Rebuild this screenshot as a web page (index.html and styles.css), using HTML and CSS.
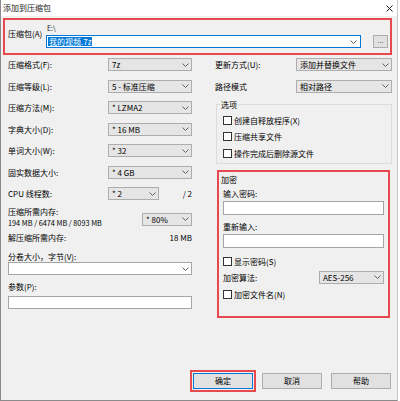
FILE: index.html
```html
<!DOCTYPE html>
<html lang="zh-CN">
<head>
<meta charset="utf-8">
<title>添加到压缩包</title>
<link rel="stylesheet" href="styles.css">
</head>
<body>
<div class="window">
  <div class="titlebar">
    <span class="title">添加到压缩包</span>
    <svg class="close" width="7" height="7" viewBox="0 0 7 7"><path d="M0.5 0.5L6.5 6.5M6.5 0.5L0.5 6.5" stroke="#222" stroke-width="1" fill="none"/></svg>
  </div>
  <div class="body">
    <div class="archive">
      <div class="arc-label">压缩包(A)</div>
      <div class="arc-path">E:\</div>
      <div class="spacer"></div>
      <div class="spacer"></div>
      <div class="path-input">
        <span class="sel">我的视频.7z</span>
        <svg class="chev" width="7" height="4" viewBox="0 0 7 4"><path d="M0.5 0.5L3.5 3.5L6.5 0.5" fill="none" stroke="#606060"/></svg>
      </div>
      <div class="spacer"></div>
      <div class="browse">...</div>
    </div>

    <div class="main">
      <div class="left">
        <div class="row"><span class="lbl">压缩格式(F):</span><div class="select w84"><span>7z</span><svg class="chev" width="7" height="4" viewBox="0 0 7 4"><path d="M0.5 0.5L3.5 3.5L6.5 0.5" fill="none" stroke="#606060"/></svg></div></div>
        <div class="row"><span class="lbl">压缩等级(L):</span><div class="select w84"><span>5 - 标准压缩</span><svg class="chev" width="7" height="4" viewBox="0 0 7 4"><path d="M0.5 0.5L3.5 3.5L6.5 0.5" fill="none" stroke="#606060"/></svg></div></div>
        <div class="row"><span class="lbl">压缩方法(M):</span><div class="select w84"><span>* LZMA2</span><svg class="chev" width="7" height="4" viewBox="0 0 7 4"><path d="M0.5 0.5L3.5 3.5L6.5 0.5" fill="none" stroke="#606060"/></svg></div></div>
        <div class="row"><span class="lbl">字典大小(D):</span><div class="select w84"><span>* 16 MB</span><svg class="chev" width="7" height="4" viewBox="0 0 7 4"><path d="M0.5 0.5L3.5 3.5L6.5 0.5" fill="none" stroke="#606060"/></svg></div></div>
        <div class="row"><span class="lbl">单词大小(W):</span><div class="select w84"><span>* 32</span><svg class="chev" width="7" height="4" viewBox="0 0 7 4"><path d="M0.5 0.5L3.5 3.5L6.5 0.5" fill="none" stroke="#606060"/></svg></div></div>
        <div class="row"><span class="lbl">固实数据大小:</span><div class="select w84"><span>* 4 GB</span><svg class="chev" width="7" height="4" viewBox="0 0 7 4"><path d="M0.5 0.5L3.5 3.5L6.5 0.5" fill="none" stroke="#606060"/></svg></div></div>
        <div class="row"><span class="lbl">CPU 线程数:</span><div class="select w51"><span>* 2</span><svg class="chev" width="7" height="4" viewBox="0 0 7 4"><path d="M0.5 0.5L3.5 3.5L6.5 0.5" fill="none" stroke="#606060"/></svg></div><span class="threads">/ 2</span></div>
        <div class="mem">
          <div class="mem-text"><div>压缩所需内存:</div><div>194 MB / 6474 MB / 8093 MB</div></div>
          <div class="select w50 mem-sel"><span>* 80%</span><svg class="chev" width="7" height="4" viewBox="0 0 7 4"><path d="M0.5 0.5L3.5 3.5L6.5 0.5" fill="none" stroke="#606060"/></svg></div>
        </div>
        <div class="unzip"><span>解压缩所需内存:</span><span>18 MB</span></div>
        <div class="vol-label">分卷大小，字节(V):</div>
        <div class="combo"><svg class="chev" width="7" height="4" viewBox="0 0 7 4"><path d="M0.5 0.5L3.5 3.5L6.5 0.5" fill="none" stroke="#606060"/></svg></div>
        <div class="param-label">参数(P):</div>
        <div class="textbox"></div>
      </div>

      <div class="right">
        <div class="row"><span class="lbl r">更新方式(U):</span><div class="select w96"><span>添加并替换文件</span><svg class="chev" width="7" height="4" viewBox="0 0 7 4"><path d="M0.5 0.5L3.5 3.5L6.5 0.5" fill="none" stroke="#606060"/></svg></div></div>
        <div class="row"><span class="lbl r">路径模式</span><div class="select w96"><span>相对路径</span><svg class="chev" width="7" height="4" viewBox="0 0 7 4"><path d="M0.5 0.5L3.5 3.5L6.5 0.5" fill="none" stroke="#606060"/></svg></div></div>
        <div class="group">
          <span class="legend">选项</span>
          <div class="cb first"><span class="box"></span><span>创建自释放程序(X)</span></div>
          <div class="cb"><span class="box"></span><span>压缩共享文件</span></div>
          <div class="cb"><span class="box"></span><span>操作完成后删除源文件</span></div>
        </div>
        <div class="encrypt">
          <div class="enc-title">加密</div>
          <div class="enc-label first">输入密码:</div>
          <div class="pw"></div>
          <div class="enc-label">重新输入:</div>
          <div class="pw"></div>
          <div class="cb show"><span class="box"></span><span>显示密码(S)</span></div>
          <div class="algo"><span>加密算法:</span><div class="select w65"><span>AES-256</span><svg class="chev" width="7" height="4" viewBox="0 0 7 4"><path d="M0.5 0.5L3.5 3.5L6.5 0.5" fill="none" stroke="#606060"/></svg></div></div>
          <div class="cb names"><span class="box"></span><span>加密文件名(N)</span></div>
        </div>
      </div>
    </div>

    <div class="buttons">
      <div class="ok-wrap"><div class="btn ok">确定</div></div>
      <div class="btn cancel">取消</div>
      <div class="btn help">帮助</div>
    </div>
  </div>
</div>
</body>
</html>
```
FILE: styles.css
```css
html, body {
  margin: 0;
  padding: 0;
  background: #ffffff;
}
body {
  font-family: "Noto Sans CJK SC", "Noto Sans", sans-serif;
  font-size: 8px;
  color: #000;
}
.window {
  width: 398px;
  height: 401px;
  box-sizing: border-box;
  border-left: 1px solid #8a8a8a;
  border-right: 1px solid #c9c9c9;
  border-bottom: 1px solid #8a8a8a;
  display: flex;
  flex-direction: column;
  background: #f0f0f0;
}
.titlebar {
  height: 16px;
  background: #ffffff;
  display: flex;
  align-items: center;
  padding-left: 2px;
  flex: none;
}
.title {
  line-height: 16px;
  color: #222;
}
.close {
  margin-left: auto;
  margin-right: 4px;
  margin-top: 0px;
}
.body {
  flex: 1;
  display: flex;
  flex-direction: column;
}
.archive {
  margin: 2px 0 0 2px;
  width: 389px;
  height: 37px;
  box-sizing: border-box;
  border: 2px solid #e64a4f;
  padding: 3px 0 0 3px;
  display: grid;
  grid-template-columns: 38px 315px 12px 15px;
  grid-template-rows: 12px 13px;
}
.arc-label {
  grid-row: 1 / 3;
  grid-column: 1;
  align-self: start;
  margin-top: 6px;
  line-height: 10px;
}
.arc-path {
  grid-row: 1;
  grid-column: 2;
  font-size: 7px;
  line-height: 10px;
  color: #222;
  padding-left: 1px;
}
.path-input {
  grid-row: 2;
  grid-column: 2;
  box-sizing: border-box;
  height: 13px;
  border: 1px solid #0078d7;
  background: #fff;
  display: flex;
  align-items: center;
  padding-left: 1px;
}
.sel {
  background: #0078d7;
  color: #fff;
  line-height: 9px;
  padding: 0 1px;
}
.browse {
  grid-row: 2;
  grid-column: 4;
  box-sizing: border-box;
  height: 13px;
  border: 1px solid #adadad;
  background: #e1e1e1;
  color: #555;
  font-size: 7px;
  line-height: 9px;
  text-align: center;
}
.chev {
  margin-left: auto;
  margin-right: 2px;
  flex: none;
}
.path-input .chev {
  margin-right: 3px;
}
.main {
  display: flex;
  margin-top: 3px;
  padding-left: 7px;
}
.left {
  width: 184px;
  display: flex;
  flex-direction: column;
}
.right {
  width: 177px;
  margin-left: 23px;
  display: flex;
  flex-direction: column;
}
.row {
  display: flex;
  align-items: center;
  height: 13px;
}
.row + .row {
  margin-top: 8.5px;
}
.lbl {
  width: 100px;
  flex: none;
  line-height: 13px;
}
.lbl.r {
  width: 81px;
}
.select {
  box-sizing: border-box;
  height: 13px;
  border: 1px solid #adadad;
  background: #e5e5e5;
  display: flex;
  align-items: center;
  padding-left: 3px;
  line-height: 11px;
  flex: none;
}
.w84 { width: 84px; }
.w51 { width: 51px; }
.w50 { width: 50px; }
.w96 { width: 96px; }
.w65 { width: 65px; }
.threads {
  margin-left: auto;
}
.mem {
  display: flex;
  align-items: center;
  margin-top: 7px;
}
.mem-text {
  flex: 1;
  line-height: 10.5px;
}
.mem-text div + div {
  font-size: 7.3px;
}
.mem-sel {
  margin-top: 3px;
}
.unzip {
  display: flex;
  justify-content: space-between;
  margin-top: 5px;
  line-height: 10px;
}
.vol-label {
  margin-top: 9px;
  line-height: 10px;
}
.combo {
  box-sizing: border-box;
  height: 13px;
  border: 1px solid #a5a5a5;
  background: #fff;
  display: flex;
  align-items: center;
}
.param-label {
  margin-top: 7px;
  line-height: 10px;
}
.textbox {
  margin-top: 4px;
  box-sizing: border-box;
  height: 13px;
  border: 1px solid #a5a5a5;
  background: #fff;
}
.group {
  margin-top: 11.5px;
  margin-left: 1px;
  width: 176px;
  box-sizing: border-box;
  border: 1px solid #dcdcdc;
  padding: 0 0 1.5px 6px;
  display: flex;
  flex-direction: column;
}
.legend {
  align-self: flex-start;
  margin-top: -5.5px;
  margin-left: -3px;
  padding: 0 1px;
  line-height: 9px;
  background: #f0f0f0;
}
.cb {
  display: flex;
  align-items: center;
  height: 16.5px;
}
.cb.first {
  margin-top: 3.5px;
}
.box {
  width: 9px;
  height: 9px;
  box-sizing: border-box;
  border: 1px solid #333;
  background: #fff;
  margin-right: 2px;
  flex: none;
}
.encrypt {
  margin-top: 6px;
  margin-left: 2px;
  width: 173px;
  height: 148px;
  box-sizing: border-box;
  border: 2px solid #e64a4f;
  padding: 3px 4px 0 4px;
  display: flex;
  flex-direction: column;
}
.enc-title {
  margin-left: -2px;
  line-height: 9px;
}
.enc-label {
  line-height: 10px;
  margin-top: 7px;
}
.enc-label.first {
  margin-top: 5px;
}
.pw {
  margin-top: 2px;
  box-sizing: border-box;
  height: 14px;
  border: 1px solid #a5a5a5;
  background: #fff;
}
.cb.show {
  margin-top: 5px;
  height: 16px;
}
.algo {
  display: flex;
  align-items: center;
  justify-content: space-between;
  height: 16px;
}
.cb.names {
  margin-top: 1px;
  height: 16px;
}
.buttons {
  margin-top: auto;
  margin-bottom: 8px;
  display: flex;
  justify-content: flex-end;
  align-items: center;
  padding-right: 6px;
}
.ok-wrap {
  box-sizing: border-box;
  border: 2px solid #e64a4f;
  padding: 1px;
  height: 22px;
}
.btn {
  box-sizing: border-box;
  width: 60px;
  height: 16px;
  border: 1px solid #adadad;
  background: #e1e1e1;
  text-align: center;
  line-height: 14px;
}
.btn.ok {
  border-color: #0078d7;
}
.cancel {
  margin-left: 6px;
}
.help {
  margin-left: 9px;
}
```
